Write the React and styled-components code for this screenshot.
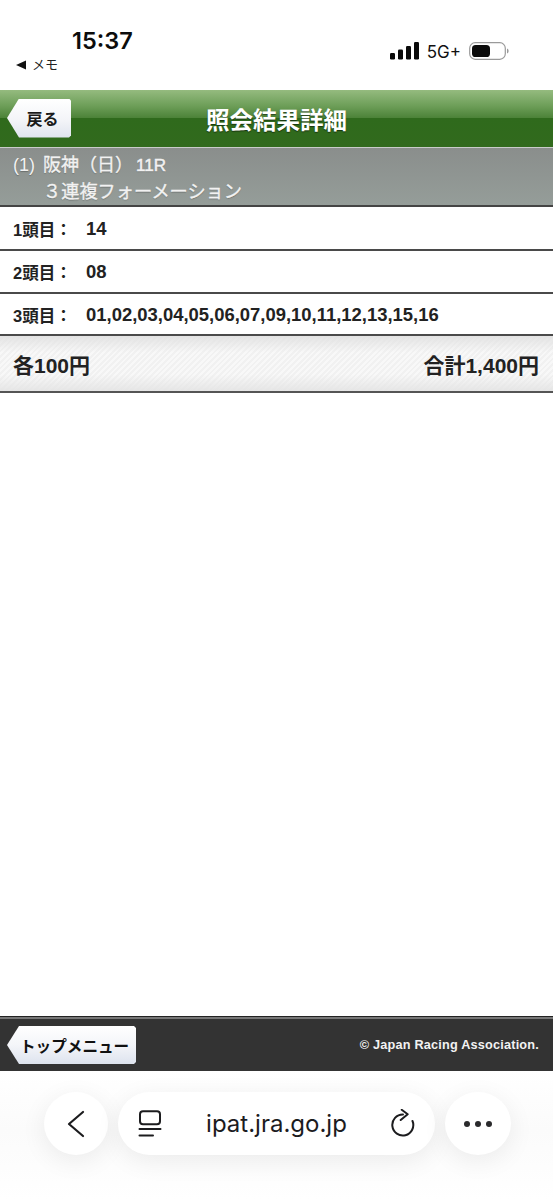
import React from 'react';
import styled, { createGlobalStyle } from 'styled-components';

const JP = `"Liberation Sans", "Noto Sans CJK JP", sans-serif`;

const GlobalStyle = createGlobalStyle`
  html, body {
    margin: 0;
    padding: 0;
    background: #fff;
  }
  * {
    box-sizing: border-box;
  }
`;

const ROWS = [
  { label: '1頭目：', value: '14', height: 44 },
  { label: '2頭目：', value: '08', height: 43 },
  { label: '3頭目：', value: '01,02,03,04,05,06,07,09,10,11,12,13,15,16', height: 42 },
];

export default function App() {
  return (
    <Page>
      <GlobalStyle />
      <StatusBar>
        <StatusLeft>
          <Time>15:37</Time>
          <BackToApp>
            <BackTriangle viewBox="0 0 10 10">
              <path d="M0 5 L10 0.5 V9.5 Z" fill="#111" />
            </BackTriangle>
            メモ
          </BackToApp>
        </StatusLeft>
        <StatusRight>
          <Signal viewBox="0 0 29 18">
            <rect x="0" y="11" width="5" height="6.5" rx="1.2" />
            <rect x="8" y="7.5" width="5" height="10" rx="1.2" />
            <rect x="16" y="4" width="5" height="13.5" rx="1.2" />
            <rect x="24" y="0" width="5" height="17.5" rx="1.2" />
          </Signal>
          <Network>5G+</Network>
          <Battery viewBox="0 0 40 18">
            <rect x="0.7" y="0.7" width="35.6" height="16.6" rx="5.5" fill="none" stroke="#9a9a9a" strokeWidth="1.2" />
            <rect x="3" y="3" width="18" height="12" rx="3.6" fill="#0a0a0a" />
            <path d="M38 6.5 C39.2 7 39.6 8 39.6 9 C39.6 10 39.2 11 38 11.5 Z" fill="#9a9a9a" />
          </Battery>
        </StatusRight>
      </StatusBar>

      <Header>
        <BackButton>戻る</BackButton>
        <Title>照会結果詳細</Title>
      </Header>

      <RaceInfo>
        <RaceLine>
          <RaceNo>(1)</RaceNo>
          <span>阪神（日）<RaceNum>11R</RaceNum></span>
        </RaceLine>
        <BetType>３連複フォーメーション</BetType>
      </RaceInfo>

      {ROWS.map(({ label, value, height }) => (
        <Row key={label} $height={height}>
          <RowLabel>{label}</RowLabel>
          <RowValue>{value}</RowValue>
        </Row>
      ))}

      <Total>
        <span>各100円</span>
        <span>合計1,400円</span>
      </Total>

      <Spacer />

      <Footer>
        <TopMenu>トップメニュー</TopMenu>
        <Copyright>© Japan Racing Association.</Copyright>
      </Footer>

      <BrowserBar>
        <RoundButton>
          <svg width="24" height="32" viewBox="0 0 24 32" fill="none" stroke="#1c1c1e" strokeWidth="2.2" strokeLinecap="round" strokeLinejoin="round">
            <path d="M19 4 L5 16 L19 28" />
          </svg>
        </RoundButton>
        <AddressPill>
          <svg width="24" height="27" viewBox="0 0 24 27" fill="none" stroke="#1c1c1e" strokeWidth="2" strokeLinecap="round">
            <rect x="2" y="1.2" width="20" height="13" rx="3" />
            <path d="M1.5 19 H22.5" />
            <path d="M1.5 25.5 H15" />
          </svg>
          <Url>ipat.jra.go.jp</Url>
          <svg width="24" height="30" viewBox="0 0 24 30" fill="none" stroke="#1c1c1e" strokeWidth="2" strokeLinecap="round" strokeLinejoin="round">
            <path d="M12 5.5 A10.5 10.5 0 1 0 21.5 12" />
            <path d="M10.7 0.8 L16.7 5.2 L9.7 11" />
          </svg>
        </AddressPill>
        <MoreButton>
          <Dot />
          <Dot />
          <Dot />
        </MoreButton>
      </BrowserBar>
    </Page>
  );
}

const Page = styled.div`
  display: flex;
  flex-direction: column;
  width: 553px;
  height: 1200px;
  overflow: hidden;
  background: #fff;
  color: #222;
  font-family: ${JP};
`;

const StatusBar = styled.div`
  height: 90px;
  flex-shrink: 0;
  display: flex;
  justify-content: space-between;
  background: #fff;
`;

const StatusLeft = styled.div`
  display: flex;
  flex-direction: column;
  padding: 27px 0 0 16px;
`;

const Time = styled.div`
  margin-left: 56px;
  font-family: Inter, sans-serif;
  font-size: 23.5px;
  font-weight: 600;
  line-height: 28px;
  color: #0c0c0c;
`;

const BackToApp = styled.div`
  display: flex;
  align-items: center;
  gap: 6px;
  margin-top: 2px;
  font-size: 13px;
  line-height: 16px;
  color: #222;
`;

const BackTriangle = styled.svg`
  width: 10px;
  height: 10px;
`;

const StatusRight = styled.div`
  display: flex;
  align-items: flex-start;
  padding: 42px 44px 0 0;
`;

const Signal = styled.svg`
  width: 29px;
  height: 18px;
  fill: #0a0a0a;
`;

const Network = styled.div`
  margin-left: 8px;
  font-family: Inter, sans-serif;
  font-size: 17px;
  line-height: 20px;
  color: #111;
`;

const Battery = styled.svg`
  width: 40px;
  height: 18px;
  margin-left: 8px;
`;

const Header = styled.div`
  position: relative;
  height: 57px;
  flex-shrink: 0;
  display: flex;
  align-items: center;
  padding-left: 7px;
  background: linear-gradient(180deg, #95bb7f 0%, #6d9e58 28%, #4c8238 49%, #2f6a1c 50%, #316a1d 100%);
`;

const BackButton = styled.div`
  width: 64px;
  height: 39px;
  margin-top: -1px;
  padding-left: 7px;
  display: flex;
  align-items: center;
  justify-content: center;
  font-size: 16px;
  font-weight: 700;
  color: #1a1a1a;
  background: linear-gradient(180deg, #ffffff 0%, #f3f4f8 55%, #dfe4ee 100%);
  clip-path: polygon(12px 0, calc(100% - 2px) 0, 100% 2px, 100% calc(100% - 2px), calc(100% - 2px) 100%, 12px 100%, 0 50%);
`;

const Title = styled.h1`
  position: absolute;
  left: 0;
  right: 0;
  margin: 0;
  text-align: center;
  font-size: 23.5px;
  font-weight: 700;
  color: #fff;
  text-shadow: 0 1px 1px rgba(0, 0, 0, 0.5);
`;

const RaceInfo = styled.div`
  height: 60px;
  flex-shrink: 0;
  padding: 5px 13px 0;
  border-top: 1.5px solid #c9ccca;
  border-bottom: 2px solid #444;
  background: linear-gradient(180deg, #8a8e8c 0%, #959d99 100%);
  color: #f2f2f2;
  font-size: 18px;
  font-weight: 400;
  line-height: 24px;
  -webkit-text-stroke: 0.35px #f2f2f2;
  text-shadow: 0 1px 1px rgba(0, 0, 0, 0.25);
`;

const RaceLine = styled.div`
  display: flex;
  gap: 8px;
`;

const RaceNo = styled.span`
  -webkit-text-stroke: 0;
`;

const RaceNum = styled.span`
  margin-left: 3px;
  font-size: 17px;
  -webkit-text-stroke: 0.5px #f2f2f2;
`;

const BetType = styled.div`
  margin-top: 2px;
  padding-left: 30px;
  font-size: 18.2px;
`;

const Row = styled.div`
  height: ${(p) => p.$height}px;
  flex-shrink: 0;
  display: flex;
  align-items: center;
  padding: 1px 13px 0;
  border-bottom: 2px solid #4a4a4a;
  font-size: 16.5px;
  font-weight: 700;
  color: #222;
`;

const RowLabel = styled.span`
  width: 73px;
  flex-shrink: 0;
`;

const RowValue = styled.span`
  font-size: 18.45px;
`;

const Total = styled.div`
  height: 57px;
  flex-shrink: 0;
  display: flex;
  align-items: center;
  justify-content: space-between;
  padding: 0 14px 0 13px;
  border-bottom: 2px solid #555;
  font-size: 21px;
  font-weight: 700;
  color: #222;
  background:
    linear-gradient(180deg, rgba(225, 225, 225, 0.9) 0%, rgba(255, 255, 255, 0) 30%, rgba(255, 255, 255, 0) 70%, rgba(228, 228, 228, 0.9) 100%),
    repeating-linear-gradient(135deg, #f8f8f8 0, #f8f8f8 2px, #f1f1f1 2px, #f1f1f1 4px);
`;

const Spacer = styled.div`
  flex: 1;
`;

const Footer = styled.div`
  height: 54px;
  flex-shrink: 0;
  display: flex;
  align-items: center;
  justify-content: space-between;
  padding: 0 14px 0 7px;
  border-top: 2px solid #777;
  background: #333333;
  box-shadow: 0 -1px 0 #222;
`;

const TopMenu = styled.div`
  width: 129px;
  height: 38px;
  padding-left: 13px;
  display: flex;
  align-items: center;
  font-size: 15.6px;
  font-weight: 700;
  color: #111;
  background: linear-gradient(180deg, #ffffff 0%, #f4f5f9 50%, #dde3ee 100%);
  clip-path: polygon(12px 0, calc(100% - 2px) 0, 100% 2px, 100% calc(100% - 2px), calc(100% - 2px) 100%, 12px 100%, 0 50%);
`;

const Copyright = styled.div`
  font-size: 12.7px;
  font-weight: 700;
  letter-spacing: 0.2px;
  color: #f2f2f2;
`;

const BrowserBar = styled.div`
  height: 129px;
  flex-shrink: 0;
  display: flex;
  align-items: flex-start;
  gap: 10px;
  padding: 21px 42px 0 44px;
  background: linear-gradient(180deg, #fff 0%, #fbfbfb 45%, #fdfdfd 75%, #fff 100%);
`;

const RoundButton = styled.div`
  width: 64px;
  height: 63px;
  flex-shrink: 0;
  display: flex;
  align-items: center;
  justify-content: center;
  border-radius: 50%;
  background: #fff;
  box-shadow: 0 6px 26px rgba(0, 0, 0, 0.07);
`;

const MoreButton = styled(RoundButton)`
  width: 66px;
  gap: 5px;
`;

const Dot = styled.span`
  width: 6px;
  height: 6px;
  border-radius: 50%;
  background: #2a2a2c;
`;

const AddressPill = styled.div`
  width: 317px;
  height: 63px;
  flex-shrink: 0;
  display: flex;
  align-items: center;
  justify-content: space-between;
  padding: 0 20px;
  border-radius: 32px;
  background: #fff;
  box-shadow: 0 6px 26px rgba(0, 0, 0, 0.07);
`;

const Url = styled.span`
  font-family: Inter, sans-serif;
  font-size: 24px;
  color: #1c1c1e;
`;
